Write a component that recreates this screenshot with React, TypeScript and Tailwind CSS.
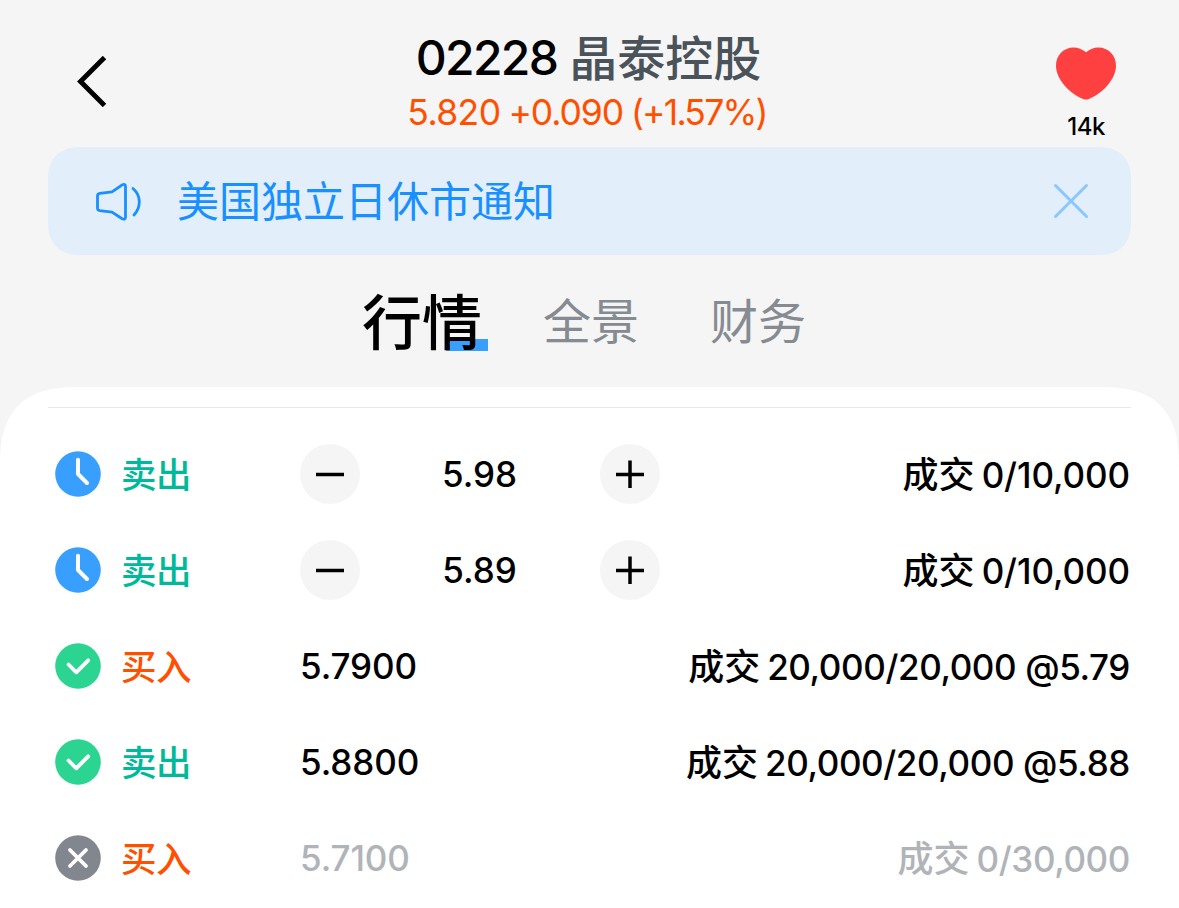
type OrderStatus = "pending" | "filled" | "cancelled";
type OrderSide = "buy" | "sell";

interface Order {
  id: number;
  status: OrderStatus;
  side: OrderSide;
  price: string;
  filled: string;
}

const orders: Order[] = [
  { id: 1, status: "pending", side: "sell", price: "5.98", filled: "0/10,000" },
  { id: 2, status: "pending", side: "sell", price: "5.89", filled: "0/10,000" },
  { id: 3, status: "filled", side: "buy", price: "5.7900", filled: "20,000/20,000 @5.79" },
  { id: 4, status: "filled", side: "sell", price: "5.8800", filled: "20,000/20,000 @5.88" },
  { id: 5, status: "cancelled", side: "buy", price: "5.7100", filled: "0/30,000" },
];

const statusFill: Record<OrderStatus, string> = {
  pending: "fill-[#389fff]",
  filled: "fill-[#2bd591]",
  cancelled: "fill-[#82878f]",
};

const statusPath: Record<OrderStatus, string> = {
  pending: "M23 8.7V23L32 32",
  filled: "M13.5 21.5L21.3 29.3L33.2 17.3",
  cancelled: "M15 15L31 31M31 15L15 31",
};

function StatusIcon({ status }: { status: OrderStatus }) {
  return (
    <svg viewBox="0 0 46 46" className="size-[46px] shrink-0" fill="none">
      <circle cx="23" cy="23" r="22.8" className={statusFill[status]} />
      <path
        d={statusPath[status]}
        stroke="#fff"
        strokeWidth={status === "pending" ? 4 : 3.8}
        strokeLinecap="round"
        strokeLinejoin="round"
      />
    </svg>
  );
}

function StepButton({ kind }: { kind: "minus" | "plus" }) {
  return (
    <button className="flex size-[60px] items-center justify-center rounded-full bg-[#f5f5f5]">
      <svg viewBox="0 0 28 28" className="size-7" stroke="#000" strokeWidth="3.5">
        <path d={kind === "minus" ? "M0 14.5H28" : "M0 14.5H28M14 0.500V28"} />
      </svg>
    </button>
  );
}

function OrderRow({ order }: { order: Order }) {
  const pending = order.status === "pending";
  const color = order.status === "cancelled" ? "text-[#b0b4b8]" : "text-black";
  return (
    <li className="flex h-24 items-center pl-[7px] text-[35px] font-medium">
      <StatusIcon status={order.status} />
      <span
        className={`ml-5 w-[179px] pt-[3px] text-[35.5px] tracking-[-0.4px] ${
          order.side === "buy" ? "text-[#ff5000]" : "text-[#00b99a]"
        }`}
      >
        {order.side === "buy" ? "买入" : "卖出"}
      </span>
      {pending ? (
        <div className="flex w-[360px] items-center justify-between">
          <StepButton kind="minus" />
          <span className="pt-px pr-px">{order.price}</span>
          <StepButton kind="plus" />
        </div>
      ) : (
        <span className={`pt-px tracking-[-0.1px] ${color}`}>{order.price}</span>
      )}
      <span className={`ml-auto flex items-baseline gap-[7px] pt-0.5 pr-px whitespace-nowrap ${color}`}>
        <span className="text-[36px]">成交</span>
        <span className={pending ? "tracking-[-0.1px]" : "tracking-[-0.4px]"}>{order.filled}</span>
      </span>
    </li>
  );
}

function Header() {
  return (
    <header className="flex h-[147px] justify-between px-12">
      <button className="flex w-[90px] pt-14 pl-[29px]" aria-label="返回">
        <svg viewBox="0 0 30 51" className="h-[51px] w-[30px]" fill="none">
          <path d="M27.500 1.500L3.500 25.500L27.500 49.500" stroke="#000" strokeWidth="4.9" />
        </svg>
      </button>
      <div className="flex flex-col items-center pt-[25px]">
        <h1 className="flex h-[66px] items-center gap-3 pr-0.5 whitespace-nowrap text-[48px] font-medium">
          <span className="tracking-[-1.7px]">02228</span>
          <span className="pt-0.5 text-[#4a525a]">晶泰控股</span>
        </h1>
        <p className="flex h-[42px] gap-2 pr-[5px] whitespace-nowrap text-[35.500px] leading-[43px] text-[#ff5000]">
          <span className="tracking-[-0.6px]">5.820</span>
          <span className="tracking-[-1.100px]">+0.090</span>
          <span className="tracking-[-1.800px]">(+1.57%)</span>
        </p>
      </div>
      <button className="flex w-[90px] flex-col items-center pt-[47px]">
        <svg viewBox="0 0 61 53" className="h-[53px] w-[60px]">
          <path
            d="M30.500 5C34.500 1.500 38.500 0 43 0C53.500 0 61 8 61 18.500C61 32 47.500 46.500 33.500 52.300C31.500 53.100 29.500 53.100 27.500 52.300C13.500 46.500 0 32 0 18.500C0 8 7.500 0 18 0C22.500 0 26.500 1.500 30.500 5Z"
            fill="#ff4040"
          />
        </svg>
        <span className="mt-[13px] text-[24px] leading-[28px] font-medium tracking-[-0.5px]">14k</span>
      </button>
    </header>
  );
}

function Notice() {
  return (
    <div className="mx-12 flex h-[108px] items-center rounded-[34px] bg-[#e2eefa] pr-[42px] pl-[47px] [corner-shape:superellipse(1.3)]">
      <svg
        viewBox="0 0 48 40"
        className="h-10 w-12"
        fill="none"
        stroke="#1890ff"
        strokeWidth="2.8"
        strokeLinecap="round"
        strokeLinejoin="round"
      >
        <path d="M4.800 12.300L17 10.900L27.200 3.800Q30.500 2.200 30.500 5.500V36Q30.500 39.300 27.200 37.700L17 31.100L4.800 29.700Q2.500 29.300 2.500 27V15Q2.500 12.700 4.800 12.300Z" />
        <path d="M38 7.500Q44.300 13 44.300 20.800Q44.300 28.500 39 34" />
      </svg>
      <span className="ml-[34px] pt-0.5 text-[42px] leading-[60px] font-normal text-[#1890ff]">
        美国独立日休市通知
      </span>
      <svg
        viewBox="0 0 36 36"
        className="ml-auto size-9"
        stroke="#8bc7ff"
        strokeWidth="3"
        strokeLinecap="round"
      >
        <path d="M2.500 2.500L33.500 33.500M33.500 2.500L2.500 33.500" />
      </svg>
    </div>
  );
}

function Tabs() {
  return (
    <nav className="flex h-[132px] items-center pl-[362px] text-[48px] text-[#868b92]">
      <a className="relative isolate pt-[3px] text-[60px] leading-[84px] font-medium text-black">
        行情
        <span className="absolute right-[-6px] bottom-[14px] -z-10 h-3 w-[42px] bg-[#389fff]" />
      </a>
      <a className="ml-[61px] pt-0.5">全景</a>
      <a className="ml-[71px] pt-0.5">财务</a>
    </nav>
  );
}

export default function App() {
  return (
    <div className="h-[908px] w-[1179px] overflow-hidden bg-[#f5f5f5] font-['Inter','Noto_Sans_CJK_SC',sans-serif] text-black">
      <Header />
      <Notice />
      <Tabs />
      <main className="h-[521px] rounded-t-[80px] bg-white px-12 pt-5 [corner-shape:superellipse(1.4)]">
        <div className="mb-[18px] h-px bg-[#e6e8ea]" />
        <ul>
          {orders.map((order) => (
            <OrderRow key={order.id} order={order} />
          ))}
        </ul>
      </main>
    </div>
  );
}
